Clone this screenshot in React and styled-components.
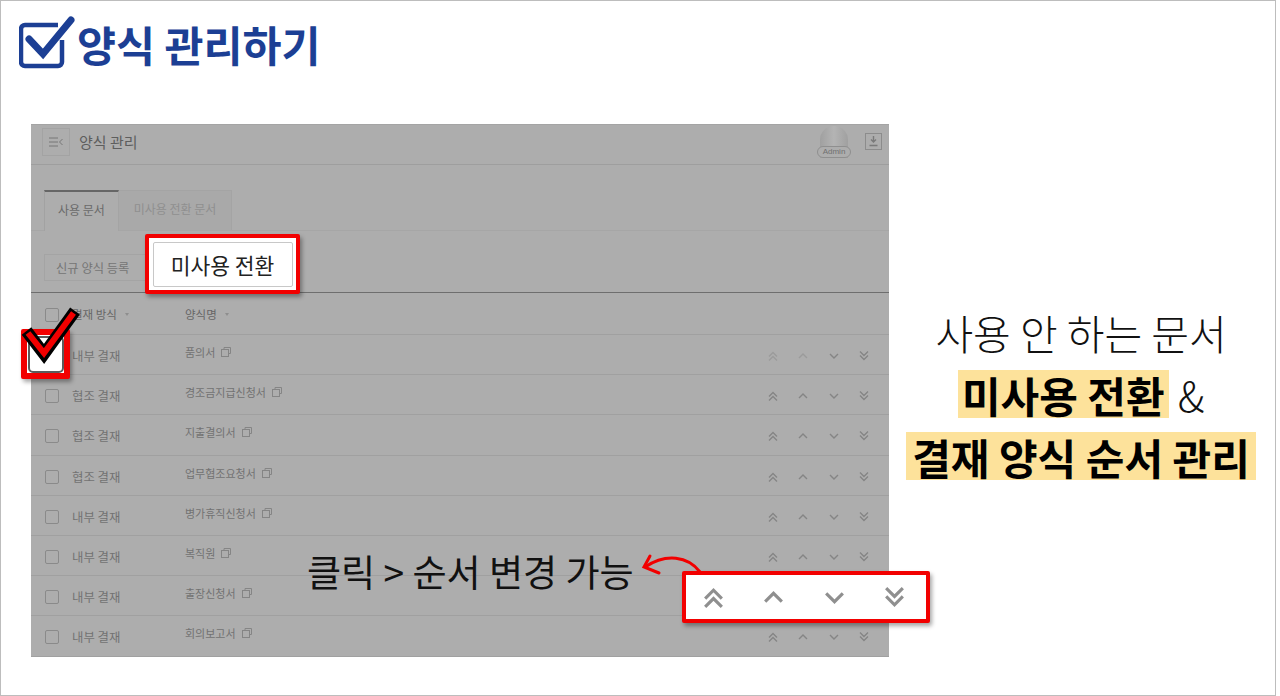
import React from "react";
import styled, { createGlobalStyle } from "styled-components";

const Global = createGlobalStyle`
  html, body { margin: 0; padding: 0; background: #fff; }
  body { font-family: "Noto Sans CJK KR", "Noto Sans", sans-serif; }
  * { box-sizing: border-box; }
`;

const Slide = styled.div`
  position: relative;
  width: 1276px;
  height: 696px;
  overflow: hidden;
  background: #fff;
  border: 1px solid #bdbdbd;
`;

const TitleRow = styled.header`
  display: flex;
  align-items: center;
  height: 123px;
  padding: 0 0 39px 18px;
`;

const TitleText = styled.h1`
  margin: 2px 0 0 0;
  font-size: 42.400px;
  line-height: 50px;
  font-weight: 700;
  color: #1c3f94;
`;

const Body = styled.div`
  display: flex;
  align-items: flex-start;
  padding-left: 30px;
`;

const Panel = styled.section`
  width: 858px;
  height: 533px;
  background: #adadad;
  border-top: 1px solid #a4a4a4;
  color: #6a6a6a;
  overflow: hidden;
`;

const TopBar = styled.div`
  display: flex;
  align-items: center;
  height: 40px;
  padding: 0 7px 6px 11px;
  border-bottom: 1px solid #9e9e9e;
`;

const MenuButton = styled.div`
  display: flex;
  align-items: center;
  justify-content: center;
  width: 28px;
  height: 28px;
  border: 1px solid #a3a3a3;
  margin-right: 9px;
`;

const PageName = styled.span`
  font-size: 15px;
  color: #5e5e5e;
  flex: 1;
`;

const Avatar = styled.div`
  position: relative;
  width: 28px;
  height: 32px;
  margin-right: 17px;
  border-radius: 14px 14px 0 0;
  background: linear-gradient(90deg, #a0a0a0, #b4b4b4 50%, #a0a0a0);
`;

const AdminTag = styled.span`
  position: absolute;
  left: -3px;
  bottom: 0;
  width: 34px;
  height: 12px;
  border: 1px solid #8f8f8f;
  border-radius: 6px;
  background: #adadad;
  font-family: "Liberation Sans", sans-serif;
  font-size: 8px;
  line-height: 10px;
  text-align: center;
  color: #707070;
`;

const SaveBox = styled.div`
  display: flex;
  width: 17px;
  height: 17px;
  border: 1px solid #8c8c8c;
  align-items: center;
  justify-content: center;
`;

const Tabs = styled.div`
  display: flex;
  height: 41px;
  margin-top: 25px;
  padding-left: 13px;
  border-bottom: 1px solid #a6a6a6;
`;

const Tab = styled.div`
  display: flex;
  align-items: center;
  justify-content: center;
  width: ${(p) => (p.$active ? "75px" : "113px")};
  padding-bottom: 5px;
  font-size: 12px;
  color: ${(p) => (p.$active ? "#6a6a6a" : "#8f8f8f")};
  background: ${(p) => (p.$active ? "#adadad" : "#a9a9a9")};
  border-top: ${(p) => (p.$active ? "2px solid #666" : "1px solid #a4a4a4")};
  border-left: ${(p) => (p.$active ? "1px solid #a2a2a2" : "none")};
  border-right: 1px solid #a4a4a4;
  margin-bottom: ${(p) => (p.$active ? "-1px" : "0")};
`;

const Actions = styled.div`
  display: flex;
  height: 62px;
  padding: 23px 0 0 13px;
  border-bottom: 1px solid #6e6e6e;
`;

const GhostButton = styled.div`
  display: flex;
  align-items: center;
  width: 102px;
  height: 27px;
  padding-left: 11px;
  font-size: 12.3px;
  color: #757575;
  border: 1px solid #a4a4a4;
`;

const Row = styled.div`
  display: grid;
  grid-template-columns: 27px 113px 1fr;
  align-items: center;
  height: ${(p) => (p.$head ? "42px" : "40.2px")};
  padding: 3px 0 0 14px;
  font-size: 12.4px;
  color: ${(p) => (p.$head ? "#666" : "#727272")};
  border-bottom: 1px solid #a0a0a0;
`;

const Box = styled.span`
  width: 14px;
  height: 14px;
  border: 1px solid #8a8a8a;
  border-radius: 2px;
`;

const Cell = styled.span`
  display: flex;
  align-items: center;
  gap: 8px;
`;

const HeadName = styled(Cell)`
  font-size: 11.5px;
  padding-bottom: 2px;
`;

const Caret = styled.i`
  width: 0;
  height: 0;
  border-left: 2.5px solid transparent;
  border-right: 2.5px solid transparent;
  border-top: 3px solid #8e8e8e;
`;

const NameCell = styled.span`
  position: relative;
  top: -4px;
  display: flex;
  align-items: center;
  gap: 6px;
  font-size: 11px;
`;

const Mover = styled.div`
  display: flex;
  align-items: center;
  margin-left: auto;
  margin-right: 19px;
  gap: 18.500px;
`;

const NameWrap = styled.div`
  display: flex;
  align-items: center;
`;

const Side = styled.aside`
  flex: 1;
  padding: 178px 2px 0 0;
  display: flex;
  flex-direction: column;
  align-items: center;
  font-size: 41px;
  line-height: 60px;
  color: #111;
`;

const SideLine = styled.div`
  display: flex;
  align-items: center;
  gap: 9px;
  min-height: 60px;
  margin-top: ${(p) => p.$gap ?? 0}px;
  white-space: nowrap;
  font-weight: 300;
`;

const Mark = styled.span`
  display: inline-block;
  height: 48px;
  font-size: 42px;
  line-height: 49px;
  padding: 0 ${(p) => p.$pad}px;
  font-weight: 700;
  color: #000;
  background: #fde29b;
`;

const CallBox = styled.div`
  position: absolute;
  left: ${(p) => p.$x}px;
  top: ${(p) => p.$y}px;
  width: ${(p) => p.$w}px;
  height: ${(p) => p.$h}px;
  padding-right: ${(p) => p.$pr ?? 0}px;
  background: #fff;
  border: ${(p) => p.$b ?? 4}px solid #f20000;
  border-radius: 2px;
  box-shadow: 2px 3px 4px rgba(0, 0, 0, 0.35);
  display: flex;
  align-items: center;
  justify-content: center;
`;

const WhiteBtn = styled.div`
  display: flex;
  align-items: center;
  justify-content: center;
  width: 140px;
  height: 45px;
  border: 1px solid #c8c8c8;
  border-radius: 2px;
  font-size: 21.5px;
  color: #222;
`;

const CheckInner = styled.div`
  width: 36px;
  height: 37px;
  border: 2px solid #5c5c5c;
  border-radius: 5px;
  background: #fff;
`;

const BigMover = styled.div`
  display: flex;
  gap: 35.500px;
  align-items: center;
`;

const Hint = styled.div`
  position: absolute;
  left: 306px;
  top: 546px;
  font-size: 37.100px;
  line-height: 48px;
  color: #111;
  white-space: nowrap;
`;

const Overlay = styled.svg`
  position: absolute;
  left: 0;
  top: 0;
  pointer-events: none;
`;

const Chev = ({ kind, size = 12, color = "#858585", sw = 1.4 }) => {
  const paths = {
    uu: ["M2 6.5 6 2.5 10 6.5", "M2 10.5 6 6.5 10 10.5"],
    u: ["M2 8 6 4 10 8"],
    d: ["M2 4 6 8 10 4"],
    dd: ["M2 1.5 6 5.5 10 1.5", "M2 5.5 6 9.5 10 5.5"],
  };
  return (
    <svg width={size} height={size} viewBox="0 0 12 12" fill="none" stroke={color} strokeWidth={sw}>
      {paths[kind].map((d) => (
        <path key={d} d={d} />
      ))}
    </svg>
  );
};

const CopyIcon = () => (
  <svg width="10" height="10" viewBox="0 0 10 10" fill="none" stroke="#858585" strokeWidth="1">
    <path d="M3 2.5V.5h6.500v6h-2" />
    <rect x=".5" y="2.5" width="7" height="7" />
  </svg>
);

const rows = [
  ["내부 결재", "품의서", true],
  ["협조 결재", "경조금지급신청서"],
  ["협조 결재", "지출결의서"],
  ["협조 결재", "업무협조요청서"],
  ["내부 결재", "병가휴직신청서"],
  ["내부 결재", "복직원"],
  ["내부 결재", "출장신청서"],
  ["내부 결재", "회의보고서"],
];

export default function App() {
  return (
    <>
      <Global />
      <Slide>
        <TitleRow>
          <svg width="58" height="54" viewBox="0 0 58 54" fill="none" stroke="#1c3f94">
            <path d="M43 24v22a4 4 0 0 1-4 4H6a4 4 0 0 1-4-4V13a4 4 0 0 1 4-4h33" strokeWidth="4.5" />
            <path d="M10 23 L24 38 L52 4" strokeWidth="7" strokeLinecap="round" strokeLinejoin="miter" />
          </svg>
          <TitleText>양식 관리하기</TitleText>
        </TitleRow>
        <Body>
          <Panel>
            <TopBar>
              <MenuButton>
                <svg width="14" height="10" viewBox="0 0 14 10" fill="none" stroke="#777" strokeWidth="1">
                  <path d="M0 1h9M0 5h9M0 9h9M13.500 2 10.500 5 13.500 8" />
                </svg>
              </MenuButton>
              <PageName>양식 관리</PageName>
              <Avatar>
                <AdminTag>Admin</AdminTag>
              </Avatar>
              <SaveBox>
                <svg width="11" height="11" viewBox="0 0 11 11" fill="none" stroke="#7a7a7a" strokeWidth="1.4">
                  <path d="M5.500 0v6M3 3.500l2.500 2.500L8 3.500M1.500 9.500h8" />
                </svg>
              </SaveBox>
            </TopBar>
            <Tabs>
              <Tab $active>사용 문서</Tab>
              <Tab>미사용 전환 문서</Tab>
            </Tabs>
            <Actions>
              <GhostButton>신규 양식 등록</GhostButton>
            </Actions>
            <Row $head>
              <Box />
              <HeadName>결재 방식 <Caret /></HeadName>
              <HeadName>양식명 <Caret /></HeadName>
            </Row>
            {rows.map(([kind, name, first]) => (
              <Row key={name}>
                <Box />
                <Cell>{kind}</Cell>
                <NameWrap>
                  <NameCell>{name} <CopyIcon /></NameCell>
                  <Mover>
                    <Chev kind="uu" color={first ? "#9b9b9b" : "#858585"} />
                    <Chev kind="u" color={first ? "#9b9b9b" : "#858585"} />
                    <Chev kind="d" />
                    <Chev kind="dd" />
                  </Mover>
                </NameWrap>
              </Row>
            ))}
          </Panel>
          <Side>
            <SideLine>사용 안 하는 문서</SideLine>
            <SideLine $gap={2}><Mark $pad={4}>미사용 전환</Mark>&amp;</SideLine>
            <SideLine $gap={2}><Mark $pad={6.5}>결재 양식 순서 관리</Mark></SideLine>
          </Side>
        </Body>
        <CallBox $x={144} $y={233} $w={155} $h={60}>
          <WhiteBtn>미사용 전환</WhiteBtn>
        </CallBox>
        <CallBox $x={20} $y={328} $w={49} $h={50} $b={6}>
          <CheckInner />
        </CallBox>
        <CallBox $x={681} $y={570} $w={248} $h={52} $pr={4}>
          <BigMover>
            <Chev kind="uu" size={25} color="#8f8f8f" sw={1.5} />
            <Chev kind="u" size={25} color="#8f8f8f" sw={1.5} />
            <Chev kind="d" size={25} color="#8f8f8f" sw={1.5} />
            <Chev kind="dd" size={25} color="#8f8f8f" sw={1.5} />
          </BigMover>
        </CallBox>
        <Hint>클릭 &gt; 순서 변경 가능</Hint>
        <Overlay width="1276" height="696" viewBox="0 0 1276 696" fill="none">
          <path d="M25.500 330 L43 353 L74 310" stroke="#000" strokeWidth="12" strokeLinejoin="miter" />
          <path d="M27 332 L43 352 L72.500 312" stroke="#f20000" strokeWidth="6" strokeLinejoin="miter" />
          <path d="M699 571 C 687 555 665 552 644 566" stroke="#f20000" strokeWidth="3" />
          <path d="M649 555 L643 566 L658 572" stroke="#f20000" strokeWidth="3" strokeLinecap="round" />
        </Overlay>
      </Slide>
    </>
  );
}
